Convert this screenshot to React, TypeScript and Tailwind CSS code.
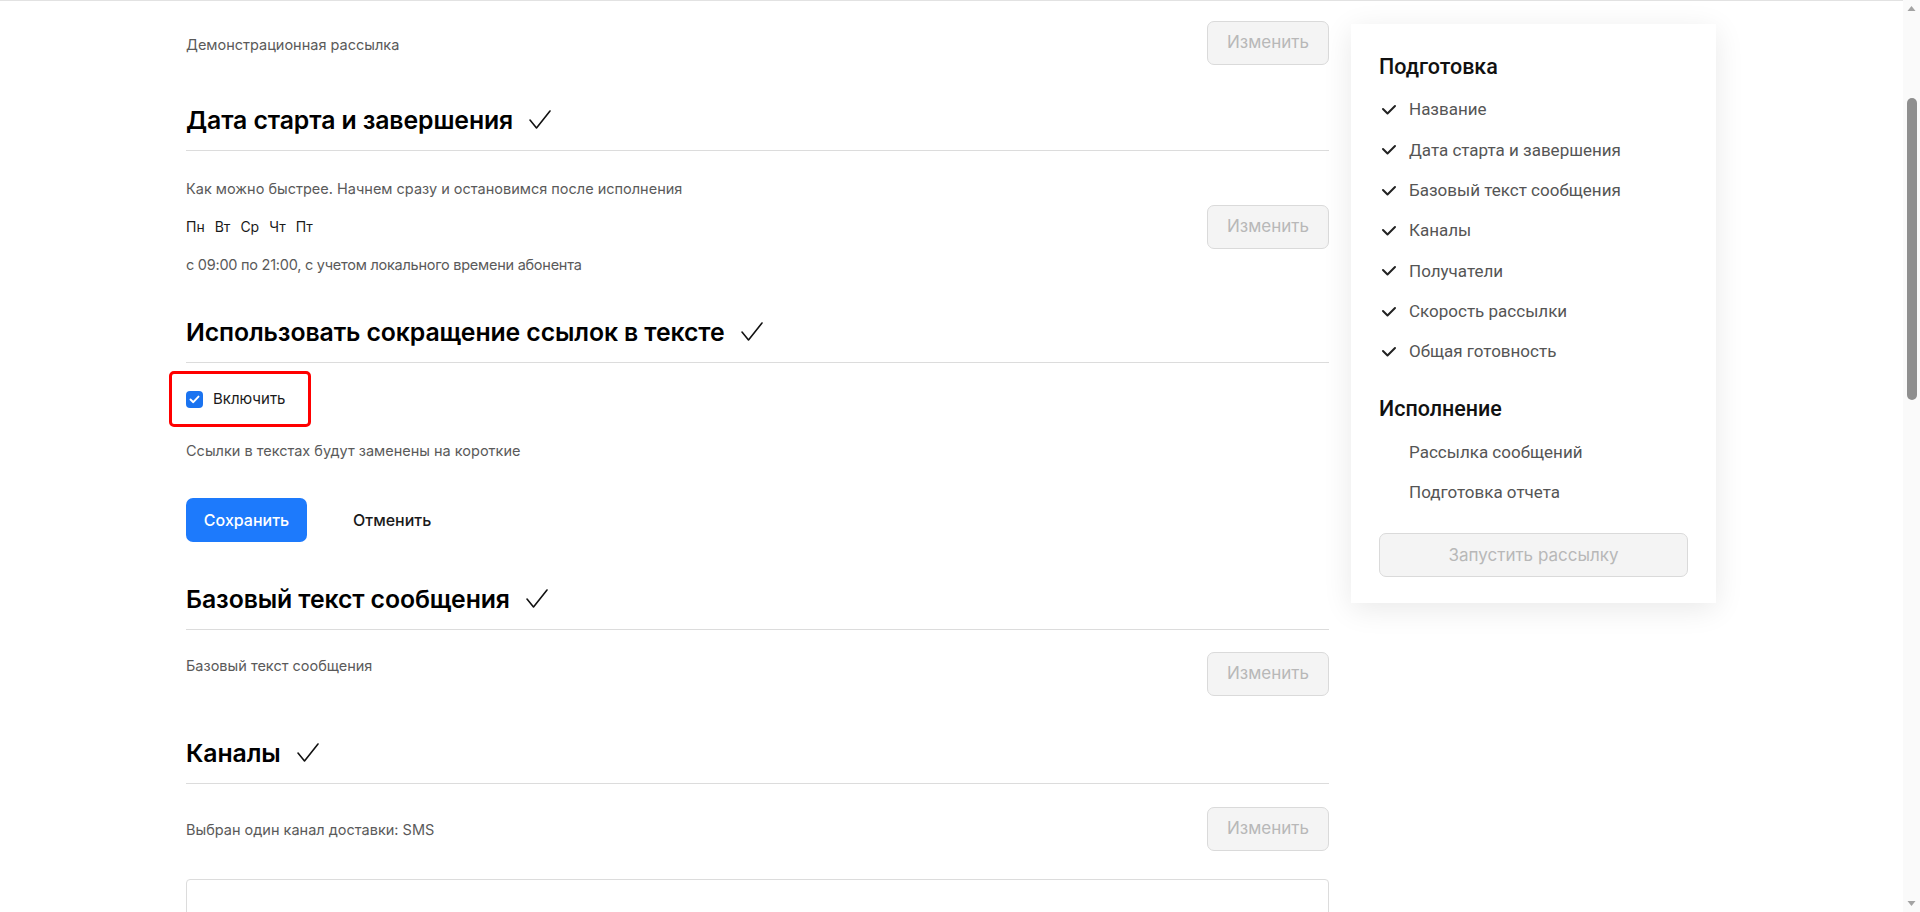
import React from "react";

const MAIN_FONT = { fontFamily: "Inter, 'Noto Sans', sans-serif" };

function HeadCheck() {
  return (
    <svg width="24" height="22" viewBox="0 0 24 22" fill="none" className="ml-[15px] shrink-0">
      <polyline points="2,11 8.5,19 22,2" stroke="#111" strokeWidth="1.6" strokeLinecap="round" strokeLinejoin="round" />
    </svg>
  );
}

function SideCheck() {
  return (
    <svg width="16" height="12" viewBox="0 0 16 12" fill="none">
      <polyline points="2,5 6.5,9.5 14,2" stroke="#222" strokeWidth="2" strokeLinecap="round" strokeLinejoin="round" />
    </svg>
  );
}

function Heading({ children, className = "" }: { children: React.ReactNode; className?: string }) {
  return (
    <div className={`flex items-center border-b border-[#dcdcdc] pb-[14px] ${className}`}>
      <h2 className="text-[24.8px] leading-[32px] font-semibold text-black tracking-[-0.1px]">{children}</h2>
      <HeadCheck />
    </div>
  );
}

function EditButton() {
  return (
    <button className="h-[44px] w-[122px] shrink-0 rounded-[7px] border border-[#dadada] bg-[#f4f4f4] text-[17px] text-[#b8b8b8]">
      Изменить
    </button>
  );
}

const sideDone = [
  "Название",
  "Дата старта и завершения",
  "Базовый текст сообщения",
  "Каналы",
  "Получатели",
  "Скорость рассылки",
  "Общая готовность",
];

export default function App() {
  return (
    <div className="flex h-[912px] w-full overflow-hidden bg-white" style={MAIN_FONT}>
      <div className="flex flex-1 gap-[22px] border-t border-[#e2e2e2] pl-[186px]">
        <main className="w-[1143px] shrink-0">
          {/* Section 1 tail */}
          <div className="flex items-center justify-between pt-[20px]">
            <p className="pt-[3px] text-[14.5px] leading-[20px] text-[#5a5a5a]">Демонстрационная рассылка</p>
            <EditButton />
          </div>

          {/* Section 2 */}
          <Heading className="mt-[39px]">Дата старта и завершения</Heading>
          <div className="flex items-center justify-between pt-[28px]">
            <div className="flex flex-col gap-[18px]">
              <p className="text-[14.5px] leading-[20px] text-[#5a5a5a]">
                Как можно быстрее. Начнем сразу и остановимся после исполнения
              </p>
              <div className="flex gap-[10px] text-[14px] leading-[20px] text-[#1a1a1a]">
                <span>Пн</span>
                <span>Вт</span>
                <span>Ср</span>
                <span>Чт</span>
                <span>Пт</span>
              </div>
              <p className="text-[14.5px] leading-[20px] tracking-[-0.25px] text-[#5a5a5a]">
                с 09:00 по 21:00, с учетом локального времени абонента
              </p>
            </div>
            <EditButton />
          </div>

          {/* Section 3 */}
          <Heading className="mt-[41px]">Использовать сокращение ссылок в тексте</Heading>
          <div className="pt-[26px]">
            <div className="relative flex h-[20px] items-center gap-[10px]">
              <span className="flex h-[17px] w-[17px] items-center justify-center rounded-[4px] bg-[#1a73f0]">
                <svg width="11" height="9" viewBox="0 0 11 9" fill="none">
                  <polyline points="1.5,4.5 4.3,7.2 9.5,1.6" stroke="#fff" strokeWidth="1.9" strokeLinecap="round" strokeLinejoin="round" />
                </svg>
              </span>
              <span className="text-[15px] leading-[20px] text-[#1a1a1a]">Включить</span>
              <span className="pointer-events-none absolute left-[-17px] top-[-18px] h-[56px] w-[142px] rounded-[5px] border-[3px] border-[#ff0000]" />
            </div>
            <p className="mt-[32px] text-[14.5px] leading-[20px] text-[#5a5a5a]">Ссылки в текстах будут заменены на короткие</p>
            <div className="mt-[37px] flex items-center gap-[22px]">
              <button className="h-[44px] w-[121px] rounded-[7px] bg-[#1d7afc] text-[16px] font-medium text-white">
                Сохранить
              </button>
              <button className="h-[44px] px-[24px] text-[16px] font-medium text-[#1a1a1a]">Отменить</button>
            </div>
          </div>

          {/* Section 4 */}
          <Heading className="mt-[41px]">Базовый текст сообщения</Heading>
          <div className="flex items-start justify-between pt-[22px]">
            <p className="pt-[4px] text-[14.5px] leading-[20px] text-[#5a5a5a]">Базовый текст сообщения</p>
            <EditButton />
          </div>

          {/* Section 5 */}
          <Heading className="mt-[41px]">Каналы</Heading>
          <div className="flex items-center justify-between pt-[23px]">
            <p className="pt-[2px] text-[14.5px] leading-[20px] text-[#5a5a5a]">Выбран один канал доставки: SMS</p>
            <EditButton />
          </div>
          <div className="mt-[28px] h-[200px] rounded-t-[4px] border border-[#dcdcdc]" />
        </main>

        <aside
          className="mt-[23px] w-[365px] shrink-0 self-start bg-white px-[28px] pb-[26px] pt-[29px] shadow-[0_6px_28px_rgba(0,0,0,0.09)]"
          style={{ fontFamily: "Roboto, 'Noto Sans', sans-serif" }}
        >
          <h3 className="text-[21.5px] leading-[28px] font-medium text-[#111]">Подготовка</h3>
          <ul className="mt-[9px]">
            {sideDone.map((t) => (
              <li key={t} className="flex h-[40.33px] items-center text-[17px] text-[#555]">
                <span className="flex w-[30px] shrink-0 items-center pl-[2px]">
                  <SideCheck />
                </span>
                {t}
              </li>
            ))}
          </ul>
          <h3 className="mt-[23px] text-[21.5px] leading-[28px] font-medium text-[#111]">Исполнение</h3>
          <ul className="mt-[9px]">
            {["Рассылка сообщений", "Подготовка отчета"].map((t) => (
              <li key={t} className="flex h-[40px] items-center pl-[30px] text-[17px] text-[#555]">
                {t}
              </li>
            ))}
          </ul>
          <button
            className="mt-[21px] h-[44px] w-full rounded-[7px] border border-[#dadada] bg-[#f4f4f4] text-[17px] text-[#b8b8b8]"
            style={MAIN_FONT}
          >
            Запустить рассылку
          </button>
        </aside>
      </div>

      {/* Browser scrollbar */}
      <div className="flex w-[17px] shrink-0 flex-col items-center bg-[#fafafa]">
        <svg width="11" height="17" viewBox="0 0 11 17" className="shrink-0">
          <polygon points="1.5,11 5.5,6 9.5,11" fill="#a3a3a3" />
        </svg>
        <div className="mt-[81px] h-[302px] w-[10px] rounded-full bg-[#8f8f8f]" />
        <div className="flex-1" />
        <svg width="11" height="17" viewBox="0 0 11 17" className="shrink-0">
          <polygon points="1.5,6 5.5,11 9.5,6" fill="#a3a3a3" />
        </svg>
      </div>
    </div>
  );
}
